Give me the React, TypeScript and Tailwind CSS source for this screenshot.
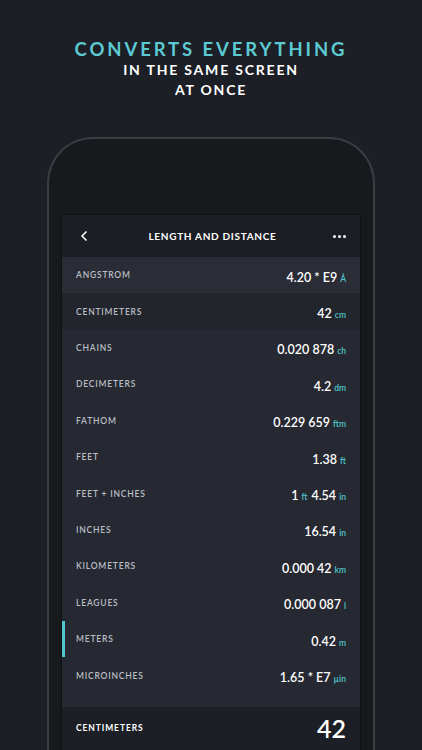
import { ChevronLeft } from 'lucide-react';

type Row = {
  label: string;
  parts: { v: string; u?: string }[];
};

const rows: Row[] = [
  { label: 'Angstrom', parts: [{ v: '4.20 * E9', u: 'Å' }] },
  { label: 'Centimeters', parts: [{ v: '42', u: 'cm' }] },
  { label: 'Chains', parts: [{ v: '0.020 878', u: 'ch' }] },
  { label: 'Decimeters', parts: [{ v: '4.2', u: 'dm' }] },
  { label: 'Fathom', parts: [{ v: '0.229 659', u: 'ftm' }] },
  { label: 'Feet', parts: [{ v: '1.38', u: 'ft' }] },
  { label: 'Feet + Inches', parts: [{ v: '1', u: 'ft' }, { v: '4.54', u: 'in' }] },
  { label: 'Inches', parts: [{ v: '16.54', u: 'in' }] },
  { label: 'Kilometers', parts: [{ v: '0.000 42', u: 'km' }] },
  { label: 'Leagues', parts: [{ v: '0.000 087', u: 'l' }] },
  { label: 'Meters', parts: [{ v: '0.42', u: 'm' }] },
  { label: 'Microinches', parts: [{ v: '1.65 * E7', u: 'µin' }] },
];

function rowBg(i: number) {
  if (i === 0) return 'bg-[#2a2d36]';
  if (i === 1) return 'bg-[#22252c]';
  return 'bg-[#262931]';
}

export default function App() {
  return (
    <div
      className="h-[750px] w-full overflow-hidden bg-[#1c1f26] flex flex-col items-center"
      style={{ fontFamily: 'Lato, "Noto Sans", sans-serif' }}
    >
      {/* Headline */}
      <div className="pt-[38px] flex flex-col items-center">
        <div className="text-[18.5px] leading-[22px] font-bold tracking-[2.9px] text-[#5ccad2]">
          CONVERTS EVERYTHING
        </div>
        <div className="text-[14px] leading-[20px] font-bold tracking-[1.8px] text-white">
          IN THE SAME SCREEN
        </div>
        <div className="text-[14px] leading-[19px] font-bold tracking-[1.8px] text-white">
          AT ONCE
        </div>
      </div>

      {/* Phone */}
      <div className="mt-[38px] w-[328px] flex-1 rounded-t-[46px] border-2 border-b-0 border-[#3a3d44] bg-[#17191d] pt-[75px] px-[12px]">
        <div className="border border-b-0 border-[#0f1013] bg-[#262931]">
          {/* Nav bar */}
          <div className="h-[42px] bg-[#1b1e24] flex items-center px-[14px] text-white">
            <ChevronLeft className="w-[16px] h-[16px]" strokeWidth={2.5} />
            <div className="flex-1 text-center text-[10px] font-bold tracking-[0.7px]">
              LENGTH AND DISTANCE
            </div>
            <div className="flex gap-[2px] items-center">
              <span className="w-[3px] h-[3px] rounded-full bg-white" />
              <span className="w-[3px] h-[3px] rounded-full bg-white" />
              <span className="w-[3px] h-[3px] rounded-full bg-white" />
            </div>
          </div>

          {/* Rows */}
          {rows.map((r, i) => (
            <div
              key={r.label}
              className={`relative h-[36.4px] flex items-center justify-between pl-[14px] pr-[14px] pt-[1px] ${rowBg(i)}`}
            >
              {r.label === 'Meters' && (
                <span className="absolute left-0 top-0 h-[37px] w-[3px] bg-[#4fc6cc]" />
              )}
              <span className="text-[8.5px] font-semibold tracking-[0.8px] uppercase text-[#b9bdc5]">
                {r.label}
              </span>
              <span className="flex items-baseline text-white">
                {r.parts.map((p, j) => (
                  <span key={j} className={j > 0 ? 'ml-[4px]' : ''}>
                    <span className="text-[12.5px] font-semibold">{p.v}</span>
                    {p.u && (
                      <span className="ml-[3px] text-[8.5px] font-semibold text-[#4fc6cc]">{p.u}</span>
                    )}
                  </span>
                ))}
              </span>
            </div>
          ))}
          <div className="h-[13px] bg-[#262931]" />

          {/* Active input */}
          <div className="h-[44px] bg-[#1c1f26] flex items-center justify-between px-[14px]">
            <span className="text-[8.5px] font-bold tracking-[0.9px] text-white">CENTIMETERS</span>
            <span className="text-[25px] font-semibold text-white">42</span>
          </div>
        </div>
      </div>
    </div>
  );
}
